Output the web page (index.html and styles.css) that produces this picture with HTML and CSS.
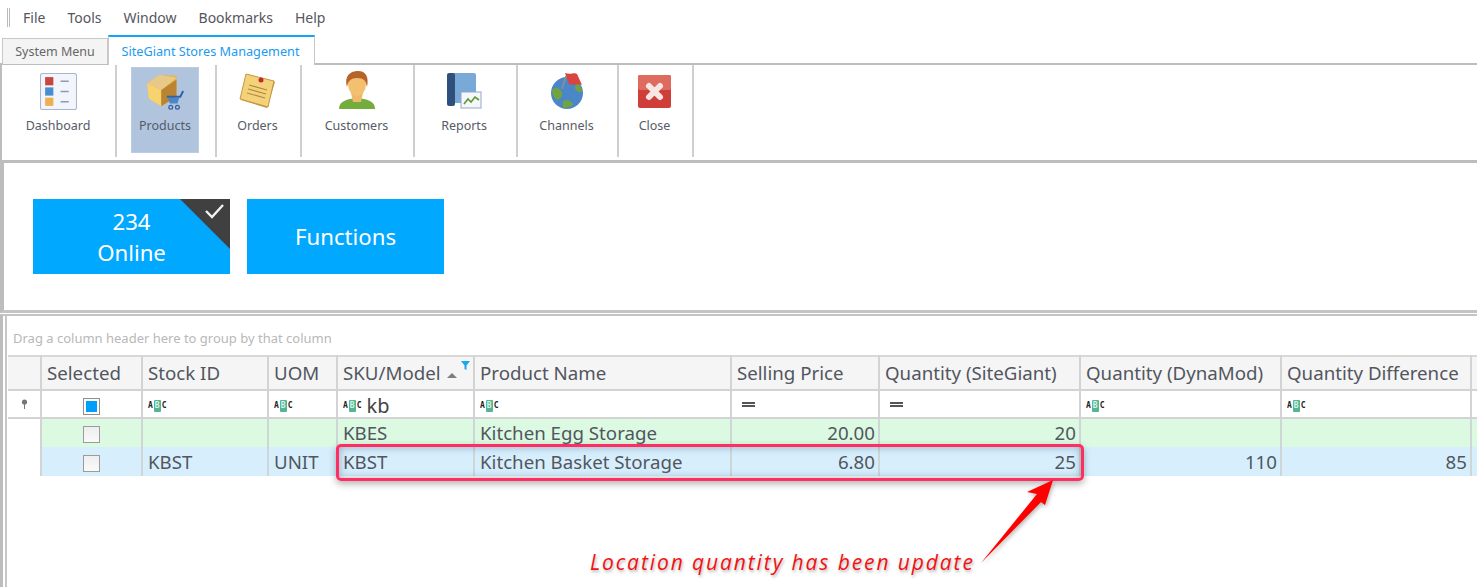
FILE: index.html
```html
<!DOCTYPE html>
<html lang="en">
<head>
<meta charset="utf-8">
<title>SiteGiant Stores Management</title>
<link rel="stylesheet" href="styles.css">
</head>
<body>
<div class="app">
  <nav class="menubar">
    <span class="grip"></span>
    <span>File</span><span>Tools</span><span>Window</span><span>Bookmarks</span><span>Help</span>
  </nav>
  <div class="tabs">
    <div class="tab">System Menu</div>
    <div class="tab active">SiteGiant Stores Management</div>
  </div>
  <div class="ribbon">
    <div class="rb w-dash"><div class="rb-icon"><svg width="37" height="37" viewBox="0 0 36 36"><rect x=".5" y=".5" width="35" height="35" rx="2" fill="#f2f5fb" stroke="#a9b5d3"/><rect x="5" y="4" width="8" height="8" fill="#c9453f"/><rect x="5" y="14" width="8" height="8" fill="#4a8ed2"/><rect x="5" y="24" width="8" height="8" fill="#eeb04f"/><path d="M20 8h8M20 18h8M20 28h8" stroke="#8b9bb8" stroke-width="1.400"/></svg></div><span>Dashboard</span></div>
    <div class="rb w-prod sel"><div class="rb-inner"><div class="rb-icon"><svg width="42" height="40" viewBox="0 0 42 42"><path d="M1 12 14 3l18 1v22L16 36 3 28z" fill="#e7b64e"/><path d="M1 12l15 7v17L3 28z" fill="#f6d36f"/><path d="M16 19 32 8v18L16 36z" fill="#bb8432"/><path d="M1 12 14 3l18 3-16 13z" fill="#e9c987"/><path d="M22 26h14l3-6" fill="none" stroke="#2c62a8" stroke-width="2"/><path d="M23 27h12l-2 6H25z" fill="#4f85c8"/><circle cx="26" cy="37" r="2" fill="none" stroke="#33609c" stroke-width="1.300"/><circle cx="33" cy="37" r="2" fill="none" stroke="#33609c" stroke-width="1.300"/></svg></div><span>Products</span></div></div>
    <div class="rb w-ord"><div class="rb-icon"><svg width="38" height="38" viewBox="0 0 38 38"><path d="M8 4 36 10 28 36 2 28z" fill="#c98f3d"/><path d="M7 2 35 9 29 35 1 27z" fill="#f3d27a" stroke="#c49640"/><path d="M10 13l18 5M9 17l18 5M8 21l18 5" stroke="#b08a45" stroke-width="1.200"/><circle cx="22" cy="8" r="2.500" fill="#c5282c"/></svg></div><span>Orders</span></div>
    <div class="rb w-cust"><div class="rb-icon"><svg width="38" height="40" viewBox="0 0 38 40"><path d="M1 38c0-8 8-10 18-11 10 1 18 3 18 11z" fill="#74ad3c"/><path d="M13 22h12l-2 9h-8z" fill="#eeb96c"/><ellipse cx="19" cy="13" rx="9" ry="12" fill="#f3c070"/><path d="M9 16C6 4 13 0 20 0c8 0 11 6 9 16-1-6-3-9-10-9-6 0-9 3-10 9z" fill="#b6642a"/></svg></div><span>Customers</span></div>
    <div class="rb w-rep"><div class="rb-icon"><svg width="36" height="38" viewBox="0 0 36 38"><path d="M3 1h25a2 2 0 0 1 2 2v28H3z" fill="#79a9d6"/><rect x="1" y="1" width="8" height="33" rx="2" fill="#2f4f7d"/><rect x="15" y="20" width="20" height="16" fill="#f4f7fc" stroke="#95a6cc"/><path d="M18 32l4-5 3 3 4-5 4 3" fill="none" stroke="#5d9a2b" stroke-width="1.600"/></svg></div><span>Reports</span></div>
    <div class="rb w-chan"><div class="rb-icon"><svg width="36" height="38" viewBox="0 0 36 38"><circle cx="18" cy="21" r="16" fill="#4b86c9"/><path d="M3 18c5-4 9-1 10 3s-2 6-5 7c-3-2-5-6-5-10zM14 29c4-2 9 0 10 4-3 2-7 3-10 3zM27 10c3 2 6 6 6 10-3 1-6-1-7-4z" fill="#71a53c"/><path d="M17 4 13 17" stroke="#8a9099" stroke-width="1.600"/><path d="M16 1c5 2 10-1 12 1l5 11c-4-2-9 1-13-1z" fill="#d9443f"/></svg></div><span>Channels</span></div>
    <div class="rb w-close"><div class="rb-icon"><svg width="33" height="33" viewBox="0 0 33 33"><rect width="33" height="33" rx="2" fill="#cf3e38"/><rect width="33" height="15" rx="2" fill="#de6a60"/><path d="M11 11l11 11M22 11 11 22" stroke="#f6e7e4" stroke-width="6" stroke-linecap="round"/></svg></div><span>Close</span></div>
  </div>
  <div class="tiles-panel">
    <div class="tile checked">
      <span>234</span><span>Online</span>
      <svg class="corner" width="50" height="50" viewBox="0 0 50 50"><path d="M0 0H50V50z" fill="#404040"/><path d="M26 12l6 6 11-12" fill="none" stroke="#f2f2f2" stroke-width="2.400"/></svg>
    </div>
    <div class="tile">Functions</div>
  </div>
  <div class="grid-panel">
    <div class="group-hint">Drag a column header here to group by that column</div>
    <table class="grid">
      <colgroup>
        <col class="c0"><col class="c1"><col class="c2"><col class="c3"><col class="c4"><col class="c5"><col class="c6"><col class="c7"><col class="c8"><col class="c9"><col>
      </colgroup>
      <thead>
        <tr>
          <th></th><th>Selected</th><th>Stock ID</th><th>UOM</th>
          <th class="sku">SKU/Model <i class="sort"></i><svg class="funnel" width="9" height="10" viewBox="0 0 9 10"><path d="M0 0h9L5.500 4.500V9l-2-1V4.500z" fill="#19a7ee"/></svg></th>
          <th>Product Name</th><th>Selling Price</th><th>Quantity (SiteGiant)</th><th>Quantity (DynaMod)</th><th>Quantity Difference</th><th></th>
        </tr>
      </thead>
      <tbody>
        <tr class="filter">
          <td class="pin"><svg width="7" height="10" viewBox="0 0 7 10"><circle cx="3.500" cy="3" r="2.600" fill="#777"/><path d="M3.500 5v5" stroke="#777"/></svg></td>
          <td class="mid"><span class="check on"></span></td>
          <td><b class="abc">A<em>B</em>C</b></td>
          <td><b class="abc">A<em>B</em>C</b></td>
          <td><b class="abc">A<em>B</em>C</b><span class="typed">kb</span></td>
          <td><b class="abc">A<em>B</em>C</b></td>
          <td><span class="eq"></span></td>
          <td><span class="eq"></span></td>
          <td><b class="abc">A<em>B</em>C</b></td>
          <td><b class="abc">A<em>B</em>C</b></td>
          <td></td>
        </tr>
        <tr class="green">
          <td class="blank"></td><td class="mid"><span class="check"></span></td><td></td><td></td><td>KBES</td><td>Kitchen Egg Storage</td><td class="num">20.00</td><td class="num">20</td><td></td><td></td><td></td>
        </tr>
        <tr class="blue">
          <td class="blank"></td><td class="mid"><span class="check"></span></td><td>KBST</td><td>UNIT</td><td>KBST</td><td>Kitchen Basket Storage</td><td class="num">6.80</td><td class="num">25</td><td class="num">110</td><td class="num">85</td><td></td>
        </tr>
      </tbody>
    </table>
  </div>
  <div class="highlight"></div>
  <svg class="arrow" width="90" height="125" viewBox="0 0 90 125"><path d="M1 98 57 29 47 27 73 15 65 40 61 37z" fill="#f00"/></svg>
  <div class="note">Location quantity has been update</div>
</div>
</body>
</html>
```
FILE: styles.css
```css
* { box-sizing: border-box; }
html, body { margin: 0; height: 587px; overflow: hidden; background: #fff; }
.app { position: relative; width: 1477px; height: 587px; overflow: hidden; font-family: "Noto Sans", "Open Sans", sans-serif; color: #4a4a55; }

.menubar { height: 34px; display: flex; align-items: center; gap: 22px; padding-left: 7px; font-size: 14px; color: #555560; }
.grip { width: 3px; height: 19px; border-left: 1px solid #bbb; border-right: 1px solid #bbb; margin-right: -9px; }

.tabs { height: 31px; display: flex; align-items: flex-end; padding-left: 2px; border-bottom: 2px solid #bdbdbd; }
.tab { height: 26px; width: 106px; background: #f4f4f4; border: 1px solid #c8c8c8; border-bottom: 0; font-size: 12.500px; display: flex; align-items: center; justify-content: center; color: #666; margin-bottom: -1px; }
.tab.active { height: 30px; width: 207px; background: #fff; color: #1b9af0; border: 1px solid #c8c8c8; border-top: 2px solid #10a6f6; border-bottom: 0; margin-bottom: -2px; position: relative; font-size: 12.700px; padding-right: 2px; }

.ribbon { height: 98px; display: flex; padding-left: 3px; border-left: 2px solid #bdbdbd; border-bottom: 3px solid #bdbdbd; font-size: 12.500px; }
.rb { height: 92px; border-right: 2px solid #cfcfcf; display: flex; flex-direction: column; align-items: center; color: #555b68; padding-top: 4px; }
.rb > span, .rb-inner > span { margin-top: 4px; line-height: 18px; }
.rb-icon { height: 44px; display: flex; align-items: center; justify-content: center; }
.w-dash { width: 112px; padding-right: 4px; }
.w-prod { width: 100px; padding: 2px 0 0 0; align-items: flex-start; }
.rb-inner { width: 68px; height: 86px; margin-left: 14px; background: #b0c4de; display: flex; flex-direction: column; align-items: center; padding-top: 2px; border: 1px solid #bccde3; }
.rb-inner > span { margin-top: 3px; }
.rb-inner > .rb-icon { padding-left: 2px; }
.w-ord { width: 85px; padding-right: 2px; }
.w-cust { width: 113px; padding-right: 2px; }
.w-rep { width: 103px; padding-right: 3px; }
.w-chan { width: 101px; padding-right: 2px; }
.w-close { width: 75px; padding-right: 2px; }

.tiles-panel { height: 150px; border-left: 4px solid #bdbdbd; border-bottom: 3px solid #c4c4c4; display: flex; gap: 17px; padding: 36px 0 0 29px; }
.tile { position: relative; width: 197px; height: 75px; background: #00a8ff; color: #fff; font-size: 22.200px; line-height: 31px; display: flex; flex-direction: column; align-items: center; justify-content: center; overflow: hidden; }
.corner { position: absolute; top: 0; right: 0; }

.grid-panel { height: 273px; margin-top: 1px; border-left: 3px solid #bdbdbd; border-top: 2px solid #c4c4c4; position: relative; padding-left: 5px; }
.grid-panel::before { content: ""; position: absolute; left: 2px; top: 0; bottom: 0; width: 2px; background: #c8c8c8; }
.group-hint { height: 39px; padding: 13px 0 0 5px; font-size: 13px; line-height: 18px; color: #b8b8b8; }

.grid { table-layout: fixed; width: 1469px; border-collapse: collapse; font-size: 18.700px; color: #525660; }
.c0 { width: 33px; } .c1 { width: 101px; } .c2 { width: 126px; } .c3 { width: 69px; } .c4 { width: 137px; }
.c5 { width: 257px; } .c6 { width: 148px; } .c7 { width: 201px; } .c8 { width: 201px; } .c9 { width: 190px; }
th, td { padding: 0 5px; white-space: nowrap; overflow: hidden; font-weight: 400; text-align: left; border-right: 2px solid #d3d3d3; }
th { padding-bottom: 2px; position: relative; }
thead tr { height: 34px; background: #f5f5f5; border-top: 2px solid #d8d8d8; border-bottom: 2px solid #d3d3d3; }
.filter { height: 28px; border-bottom: 2px solid #d3d3d3; }
.filter td { vertical-align: middle; }
.green { height: 29px; background: #dcfae2; }
.blue { height: 29px; background: #d7effd; }
.green td, .blue td { line-height: 24px; border-right-color: #cfd6d8; }
.num { text-align: right; padding-right: 3px; }
.mid, .pin { text-align: center; }
.pin { line-height: 0; }
td.blank { background: #fff; border-right-color: #d3d3d3; }
tbody tr td:last-child, thead th:last-child { border-right: 0; }

.check { display: inline-block; width: 17px; height: 17px; border: 1px solid #9b9b9b; background: linear-gradient(#eee, #fafafa); vertical-align: middle; }
.check.on { background: #fff; border-color: #8f8f8f; padding: 2px; }
.check.on::after { content: ""; display: block; width: 11px; height: 11px; background: #00a0fa; }
.sort { display: inline-block; width: 0; height: 0; border: 5px solid transparent; border-bottom: 5px solid #7d7d7d; border-top: 0; margin-left: 2px; vertical-align: 2px; }
.funnel { position: absolute; top: 4px; right: 3px; }
.abc { font: 700 8px/12px "DejaVu Sans Mono", monospace; color: #222; vertical-align: middle; }
.abc em { font-style: normal; display: inline-block; background: #55b593; color: #d8f2e8; padding: 0 1px; border-radius: 1px; margin: 0 1px; }
.typed { font-size: 20px; margin-left: 5px; color: #444; vertical-align: middle; line-height: 20px; }
.eq { display: block; width: 13px; height: 5px; margin-left: 5px; border-top: 2px solid #555; border-bottom: 2px solid #555; }

.highlight { position: absolute; left: 336px; top: 444px; width: 748px; height: 37px; border: 3px solid #ff2d62; border-radius: 5px; box-shadow: 0 3px 7px rgba(40,40,40,.35), inset 0 0 8px rgba(40,70,90,.4); }
.arrow { position: absolute; left: 980px; top: 465px; filter: drop-shadow(1px 2px 2px rgba(0,0,0,.3)); }
.note { position: absolute; left: 590px; top: 548px; font-family: "Open Sans", sans-serif; font-style: italic; font-size: 21px; line-height: 28px; color: #f31212; letter-spacing: 1.900px; text-shadow: 1px 2px 3px rgba(0,0,0,.3); white-space: nowrap; }
```
